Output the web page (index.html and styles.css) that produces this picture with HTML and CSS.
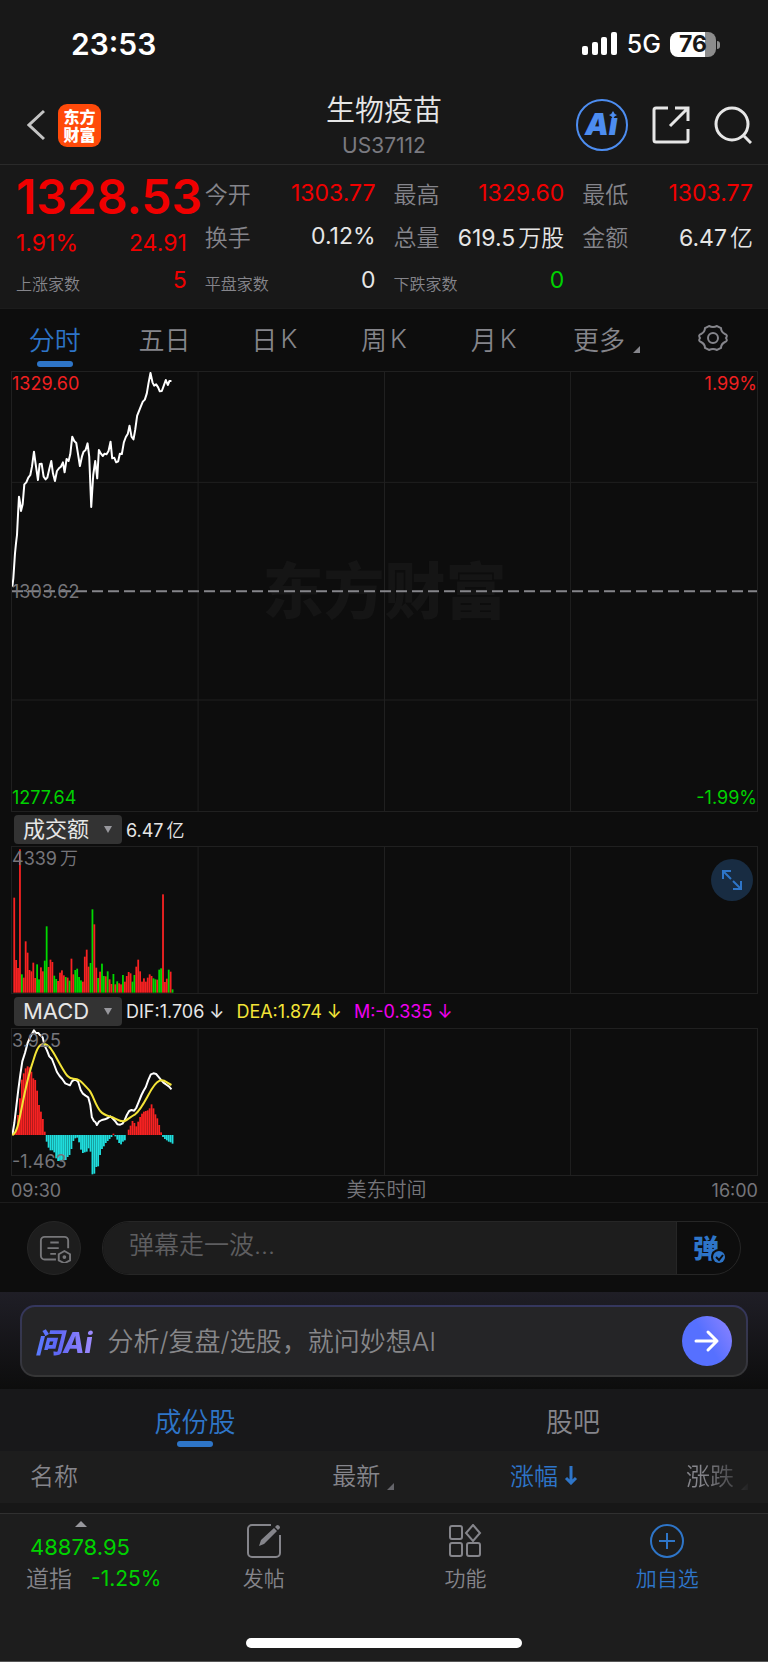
FILE: index.html
```html
<!DOCTYPE html>
<html lang="zh-CN">
<head>
    <meta charset="UTF-8">
    <meta name="viewport" content="width=device-width, initial-scale=1.0">
    <title>生物疫苗 US37112</title>
    <link rel="stylesheet" href="styles.css">
</head>
<body>
    <div class="status-bar">
        <span class="clock">23:53</span>
        <div class="status-right">
            <svg class="signal" viewBox="0 0 36 24" aria-hidden="true">
                <rect x="0" y="14" width="6" height="9" rx="2"/>
                <rect x="10" y="10" width="6" height="13" rx="2"/>
                <rect x="19" y="5" width="6" height="18" rx="2"/>
                <rect x="29" y="0" width="6" height="23" rx="2"/>
            </svg>
            <span class="network">5G</span>
            <span class="battery">76</span>
        </div>
    </div>

    <header class="header">
        <div class="header-left">
            <button class="icon-btn" aria-label="返回">
                <svg class="back-icon" viewBox="0 0 18 32"><path d="M17 2 2 16l15 14"/></svg>
            </button>
            <a class="app-logo" href="#">东方<br>财富</a>
        </div>
        <div class="header-title">
            <h1>生物疫苗</h1>
            <p>US37112</p>
        </div>
        <div class="header-right">
            <button class="icon-btn" aria-label="AI">
                <svg class="ai-icon" viewBox="0 0 52 52">
                    <circle cx="26" cy="26" r="25"/>
                    <text x="9" y="36">Aı</text>
                    <path d="M37 12q1 3 4 4-3 1-4 4-1-3-4-4 3-1 4-4z"/>
                </svg>
            </button>
            <button class="icon-btn" aria-label="分享">
                <svg class="line-icon" viewBox="0 0 38 38"><path d="M16 2H4a2 2 0 0 0-2 2v30a2 2 0 0 0 2 2h30a2 2 0 0 0 2-2V23M18 20 35 3M23 2h13v13"/></svg>
            </button>
            <button class="icon-btn" aria-label="搜索">
                <svg class="line-icon" viewBox="0 0 38 38"><circle cx="18" cy="18" r="16"/><path d="m30 30 7 7"/></svg>
            </button>
        </div>
    </header>

    <section class="quote">
        <div class="cell price up">1328.53</div>
        <div class="cell"><span class="label">今开</span><span class="up">1303.77</span></div>
        <div class="cell"><span class="label">最高</span><span class="up">1329.60</span></div>
        <div class="cell"><span class="label">最低</span><span class="up">1303.77</span></div>
        <div class="cell change up"><span>1.91%</span><span>24.91</span></div>
        <div class="cell"><span class="label">换手</span><span>0.12%</span></div>
        <div class="cell"><span class="label">总量</span><span>619.5<span class="unit">万股</span></span></div>
        <div class="cell"><span class="label">金额</span><span>6.47<span class="unit">亿</span></span></div>
        <div class="cell"><span class="label small">上涨家数</span><span class="up">5</span></div>
        <div class="cell"><span class="label small">平盘家数</span><span>0</span></div>
        <div class="cell"><span class="label small">下跌家数</span><span class="down">0</span></div>
    </section>

    <nav class="period-tabs">
        <button class="period active">分时</button>
        <button class="period">五日</button>
        <button class="period">日<span class="unit">K</span></button>
        <button class="period">周<span class="unit">K</span></button>
        <button class="period">月<span class="unit">K</span></button>
        <button class="period more">更多</button>
        <button class="period" aria-label="设置">
            <svg class="gear-icon" viewBox="0 0 30 28">
                <path d="M11 2Q15 4 19 2L23 4Q23 8 27 10Q30 11 28 14Q30 17 27 18Q23 20 23 24L19 26Q15 24 11 26L7 24Q7 20 3 18Q0 17 2 14Q0 11 3 10Q7 8 7 4Z"/>
                <circle cx="15" cy="14" r="5"/>
            </svg>
        </button>
    </nav>

    <section class="charts">
        <div class="chart price-chart">
            <span class="watermark">东方财富</span>
            <svg class="plot" viewBox="35 21 2238 1317" preserveAspectRatio="none">
                <path class="grid" d="M594 21V1338M1154 21V1338M1713 21V1338M35 352H2273M35 1005H2273"/>
                <path class="base-line" d="M35 679H2273"/>
                <polyline class="line white" points="36,665 39,640 41,610 44,565 47,535 50,510 53,450 56,395 59,412 62,438 67,418 72,358 78,352 84,338 90,330 95,305 101,260 105,290 113,345 118,297 124,296 130,335 136,343 141,338 147,312 153,288 158,325 164,348 170,318 176,310 182,305 188,292 193,322 199,282 205,288 210,268 216,215 222,228 228,234 233,265 239,303 245,275 250,260 256,255 262,235 267,275 273,426 279,330 285,288 291,340 296,255 302,266 308,273 313,266 319,268 325,258 331,230 336,280 342,278 348,292 354,289 359,266 365,267 371,232 377,216 383,206 388,182 394,215 400,223 405,195 411,152 417,137 423,122 428,110 434,104 440,85 445,55 451,24 457,52 462,62 468,58 474,67 479,79 485,78 491,62 497,45 503,60 508,48 514,48"/>
            </svg>
            <span class="tag top-left rise">1329.60</span>
            <span class="tag top-right rise">1.99%</span>
            <span class="tag mid-left">1303.62</span>
            <span class="tag bottom-left down">1277.64</span>
            <span class="tag bottom-right down">-1.99%</span>
        </div>

        <div class="indicator">
            <label class="picker">
                <select aria-label="副图指标一"><option>成交额</option></select>
            </label>
            <span>6.47<span class="unit">亿</span></span>
        </div>
        <div class="chart">
            <svg class="plot" viewBox="35 138 2238 438" preserveAspectRatio="none">
                <path class="grid" d="M594 138V576M1154 138V576M1713 138V576"/>
                <g id="volumeBars"></g>
            </svg>
            <span class="tag top-left">4339<span class="unit">万</span></span>
            <button class="expand" aria-label="全屏">
                <svg viewBox="0 0 20 20"><path d="M1 9V1h8M1 1l8 8M19 11v8h-8M19 19l-8-8"/></svg>
            </button>
        </div>

        <div class="indicator">
            <label class="picker">
                <select aria-label="副图指标二"><option>MACD</option></select>
            </label>
            <span>DIF:1.706 ↓</span>
            <span class="dea">DEA:1.874 ↓</span>
            <span class="macd">M:-0.335 ↓</span>
        </div>
        <div class="chart">
            <svg class="plot" viewBox="35 118 2238 438" preserveAspectRatio="none">
                <path class="grid" d="M594 118V556M1154 118V556M1713 118V556"/>
                <g id="macdBars"></g>
                <polyline class="line white" points="36,436 42,400 48,350 54,300 60,255 66,215 74,190 82,160 90,142 101,122 107,130 114,130 120,137 127,143 133,168 140,182 147,200 155,208 162,226 170,247 178,259 186,268 195,281 202,284 209,287 215,275 222,270 229,272 234,277 241,300 248,312 256,318 264,323 270,345 275,383 281,394 286,398 290,406 296,396 305,391 314,389 323,385 331,380 339,388 346,396 352,404 360,405 367,402 374,390 380,376 387,364 394,361 402,363 408,355 415,338 424,316 430,304 437,292 444,272 452,254 460,251 468,253 474,260 482,270 490,279 500,286 507,291 514,299"/>
                <path class="line yellow" d="M36 436C50 430 55 400 65 350S85 255 95 225S110 167 128 163S160 190 180 225S205 267 220 267S240 272 268 303C280 320 285 345 300 364C312 378 325 379 332 381C345 384 355 396 372 395C385 388 390 382 405 374C425 358 440 322 455 298C465 282 475 272 485 272S500 279 514 286"/>
            </svg>
            <span class="tag top-left">3.925</span>
            <span class="tag bottom-left">-1.463</span>
        </div>
        <div class="time-axis">
            <span>09:30</span>
            <span class="zone">美东时间</span>
            <span>16:00</span>
        </div>
    </section>

    <form class="comment-bar">
        <button type="button" class="round-btn" aria-label="弹幕设置">
            <svg viewBox="0 0 34 30">
                <path d="M18 26H6a4 4 0 0 1-4-4V6a4 4 0 0 1 4-4h21a4 4 0 0 1 4 4v8M12 8h9M9 14h12M12 20h6"/>
                <path d="m27 17 6 3.500v6.500l-6 3-6-3v-6.500z"/>
                <circle cx="27" cy="23.500" r="1"/>
            </svg>
        </button>
        <div class="comment-box">
            <input type="text" aria-label="弹幕" placeholder="弹幕走一波...">
            <button type="button" class="danmu-btn" aria-label="弹幕开关">
                <svg viewBox="0 0 34 32">
                    <text x="0" y="25">弹</text>
                    <circle class="badge-edge" cx="26" cy="24" r="8"/>
                    <circle class="badge" cx="26" cy="24" r="6"/>
                    <path d="m23 24 3 3 4-5"/>
                </svg>
            </button>
        </div>
    </form>

    <section class="ask-ai">
        <form class="ask-box">
            <span class="ask-logo">问Ai</span>
            <input type="text" aria-label="问AI" placeholder="分析/复盘/选股，就问妙想AI">
            <button type="button" class="send" aria-label="发送">
                <svg viewBox="0 0 26 24"><path d="M2 12h21M14 3l9 9-9 9"/></svg>
            </button>
        </form>
    </section>

    <nav class="section-tabs">
        <button class="section-tab active">成份股</button>
        <button class="section-tab">股吧</button>
    </nav>
    <table class="stocks">
        <thead>
            <tr>
                <th class="name">名称</th>
                <th class="sortable">最新</th>
                <th class="sorted">涨幅<svg viewBox="0 0 14 20"><path d="M7 1v17M2 13l5 5 5-5"/></svg></th>
                <th class="sortable faded">涨跌</th>
            </tr>
        </thead>
    </table>

    <footer class="bottom-bar">
        <div class="bottom-nav">
            <a class="index-link" href="#">
                <span class="index-value">48878.95</span>
                <span class="index-row"><span>道指</span><span class="index-pct">-1.25%</span></span>
            </a>
            <a class="nav-item" href="#">
                <svg viewBox="0 0 34 34"><path d="M24 1H5a4 4 0 0 0-4 4v24a4 4 0 0 0 4 4h24a4 4 0 0 0 4-4V11"/><path class="fill" d="m12 22 2-6L27 4l3 3-13 13zM28 3l2-2q3 0 3 3l-2 2z"/></svg>
                <span>发帖</span>
            </a>
            <a class="nav-item" href="#">
                <svg viewBox="0 0 34 34"><rect x="2" y="2" width="12" height="13" rx="2"/><rect x="2" y="19" width="12" height="13" rx="2"/><rect x="19" y="19" width="13" height="13" rx="2"/><path d="m25 1 7 8-7 8-7-8z"/></svg>
                <span>功能</span>
            </a>
            <a class="nav-item add" href="#">
                <svg viewBox="0 0 34 34"><circle cx="17" cy="17" r="16"/><path d="M17 9v16M9 17h16"/></svg>
                <span>加自选</span>
            </a>
        </div>
        <div class="home-indicator"></div>
    </footer>

    <script src="script.js"></script>
</body>
</html>
```
FILE: styles.css
```css
* {
    box-sizing: border-box;
}
body {
    margin: 0;
    background-color: #0d0d0d;
    color: #e6e6e6;
    font-family: Inter, "Noto Sans CJK SC", sans-serif;
    font-weight: 400;
}
button, input, select {
    font: inherit;
    color: inherit;
    background: none;
    border: none;
    padding: 0;
    margin: 0;
}
button {
    cursor: pointer;
}
a {
    color: inherit;
    text-decoration: none;
}
svg {
    display: block;
    fill: none;
    stroke: currentColor;
}
.up {
    color: #f00000;
}
.rise {
    color: #f02020;
}
.down {
    color: #00d200;
}
.unit {
    margin-left: 3px;
    font-weight: 350;
}

/* status bar */
.status-bar {
    display: flex;
    justify-content: space-between;
    align-items: center;
    height: 88px;
    padding: 0 52px 0 71px;
    background-color: #181818;
    color: #fff;
}
.clock {
    font-size: 30px;
    font-weight: 600;
}
.status-right {
    display: flex;
    align-items: center;
    gap: 9px;
}
.signal {
    width: 36px;
    height: 24px;
    fill: #fff;
    stroke: none;
}
.network {
    font-size: 25px;
    font-weight: 500;
}
.battery {
    position: relative;
    width: 46px;
    line-height: 25px;
    border-radius: 8px;
    background: linear-gradient(90deg, #fff 76%, #8c8c8c 76%);
    color: #181818;
    font-size: 23px;
    font-weight: 700;
    text-align: center;
}
.battery::after {
    content: "";
    position: absolute;
    right: -4px;
    top: 9px;
    width: 3px;
    height: 8px;
    border-radius: 0 3px 3px 0;
    background-color: #8c8c8c;
}

/* header */
.header {
    display: grid;
    grid-template-columns: 1fr auto 1fr;
    align-items: center;
    height: 77px;
    padding: 0 16px 2px;
    background-color: #181818;
    border-bottom: 1px solid #2a2a2a;
}
.header-left, .header-right {
    display: flex;
    align-items: center;
}
.header-left {
    gap: 13px;
    padding-left: 11px;
}
.header-right {
    justify-content: flex-end;
    gap: 24px;
}
.back-icon {
    width: 18px;
    height: 32px;
    color: #c4c4c4;
    stroke-width: 3;
}
.app-logo {
    width: 43px;
    height: 43px;
    padding-top: 4px;
    border-radius: 9px;
    background-color: #ff4a0a;
    color: #fff;
    font-size: 16px;
    font-weight: 900;
    line-height: 18px;
    text-align: center;
}
.header-title {
    padding-top: 4px;
    text-align: center;
}
.header-title h1 {
    margin: 0;
    font-size: 29px;
    font-weight: 350;
    line-height: 38px;
}
.header-title p {
    margin: 0;
    color: #7a7a80;
    font-size: 21px;
    line-height: 32px;
}
.ai-icon {
    width: 52px;
    height: 52px;
    color: #4d8df0;
    stroke-width: 2;
}
.ai-icon text, .ai-icon path {
    fill: currentColor;
    stroke: none;
}
.ai-icon text {
    font-size: 30px;
    font-style: italic;
    font-weight: 900;
}
.line-icon {
    width: 38px;
    height: 38px;
    stroke-width: 3;
}

/* quote */
.quote {
    display: grid;
    grid-template-columns: repeat(4, 1fr);
    grid-template-rows: 43px 43px 46px;
    column-gap: 18px;
    padding: 6px 15px 5px 16px;
    background-color: #181818;
    border-bottom: 1px solid #1c1c1c;
    font-size: 23px;
}
.cell {
    display: flex;
    justify-content: space-between;
    align-items: center;
    min-width: 0;
    white-space: nowrap;
}
.label {
    color: #85858b;
    font-weight: 350;
}
.label.small {
    padding-top: 5px;
    font-size: 16px;
}
.price {
    align-items: flex-end;
    font-size: 48px;
    font-weight: 600;
    line-height: 34px;
}
.change {
    align-items: flex-end;
    line-height: 28px;
}

/* period tabs */
.period-tabs {
    display: grid;
    grid-template-columns: repeat(7, 1fr);
    height: 62px;
    color: #85858b;
    font-size: 26px;
    font-weight: 350;
}
.period {
    position: relative;
    display: flex;
    justify-content: center;
    align-items: center;
    padding-bottom: 4px;
}
.active {
    color: #2e75c8;
}
.active::after {
    content: "";
    position: absolute;
    bottom: 4px;
    left: 50%;
    width: 36px;
    height: 6px;
    margin-left: -18px;
    border-radius: 3px;
    background-color: #2e75c8;
}
.more::after, .sortable::after {
    content: "";
    display: inline-block;
    border-left: 7px solid transparent;
    border-bottom: 7px solid currentColor;
}
.more {
    padding-left: 6px;
}
.more::after {
    margin: 22px 0 0 8px;
}
.gear-icon {
    width: 30px;
    height: 28px;
    stroke-width: 2;
}

/* charts */
.charts {
    padding: 0 10px 0 11px;
    border-bottom: 1px solid #1c1c1c;
}
.chart {
    position: relative;
    height: 148px;
    border: 1px solid #202020;
}
.price-chart {
    height: 441px;
}
.plot {
    position: relative;
    width: 100%;
    height: 100%;
}
.plot path, .plot polyline {
    vector-effect: non-scaling-stroke;
}
.grid {
    stroke: #202020;
}
.base-line {
    stroke: #85858a;
    stroke-width: 2;
    stroke-dasharray: 11 5;
}
.line {
    stroke-width: 2;
    stroke-linejoin: round;
}
.white {
    stroke: #fff;
}
.yellow {
    stroke: #f3e437;
}
.bar-red {
    fill: #f82222;
    stroke: none;
}
.bar-green {
    fill: #00d800;
    stroke: none;
}
.bar-cyan {
    fill: #1fdede;
    stroke: none;
}
.watermark {
    position: absolute;
    top: 50%;
    width: 100%;
    color: #151515;
    font-size: 61px;
    font-weight: 900;
    line-height: 80px;
    margin-top: -40px;
    text-align: center;
}
.tag {
    position: absolute;
    color: #75757a;
    font-size: 18px;
    line-height: 22px;
}
.tag.rise {
    color: #f02020;
}
.tag.down {
    color: #00d200;
}
.top-left {
    top: 1px;
    left: 0;
}
.top-right {
    top: 1px;
    right: 0;
}
.mid-left {
    top: 50%;
    left: 0;
    margin-top: -11px;
}
.bottom-left {
    bottom: 2px;
    left: 0;
}
.bottom-right {
    bottom: 2px;
    right: 0;
}
.indicator {
    display: flex;
    align-items: center;
    gap: 12px;
    height: 34px;
    padding-left: 3px;
    font-size: 18px;
}
.picker {
    position: relative;
    margin-right: -8px;
}
.picker select {
    width: 108px;
    height: 29px;
    padding-left: 9px;
    border-radius: 4px;
    background-color: #333;
    appearance: none;
    font-size: 22px;
    line-height: 29px;
}
.picker::after {
    content: "";
    position: absolute;
    top: 11px;
    right: 10px;
    border: 4px solid transparent;
    border-top: 7px solid #98989d;
    border-bottom: 0;
}
.dea {
    color: #f3e437;
}
.macd {
    color: #f000f0;
}
.expand {
    position: absolute;
    top: 12px;
    right: 4px;
    width: 42px;
    height: 42px;
    padding: 11px;
    border-radius: 50%;
    background-color: #182c42;
    color: #2e75c8;
}
.expand svg {
    stroke-width: 2;
}
.time-axis {
    display: flex;
    justify-content: space-between;
    padding-top: 3px;
    color: #75757a;
    font-size: 18px;
    line-height: 23px;
}
.zone {
    font-size: 20px;
    font-weight: 350;
}

/* comment bar */
.comment-bar {
    display: flex;
    gap: 21px;
    padding: 18px 27px 17px;
}
.round-btn {
    width: 54px;
    height: 54px;
    padding: 12px 9px 10px 11px;
    border: 1px solid #262626;
    border-radius: 50%;
    background-color: #1d1d1d;
    color: #77777a;
}
.round-btn svg {
    stroke-width: 2;
}
.comment-box {
    flex: 1;
    display: flex;
    height: 54px;
    border: 1px solid #262626;
    border-radius: 27px;
    overflow: hidden;
}
.comment-box input {
    flex: 1;
    min-width: 0;
    padding: 0 26px 6px;
    background-color: #1d1d1d;
    font-size: 25px;
}
input::placeholder {
    color: #5e5e60;
    font-weight: 350;
    opacity: 1;
}
.danmu-btn {
    width: 64px;
    padding: 10px 14px 8px 16px;
    border-left: 1px solid #262626;
    color: #2e75c8;
}
.danmu-btn svg {
    width: 34px;
    height: 32px;
    stroke: #0d0d0d;
    stroke-width: 2;
}
.danmu-btn text {
    fill: #2e75c8;
    stroke: none;
    font-size: 26px;
    font-weight: 900;
}
.badge-edge {
    fill: #0d0d0d;
    stroke: none;
}
.badge {
    fill: #2e75c8;
    stroke: none;
}

/* ask ai */
.ask-ai {
    padding: 13px 20px 12px;
    background: linear-gradient(#1f1e26, #0d0d0d);
}
.ask-box {
    display: flex;
    align-items: center;
    gap: 15px;
    height: 72px;
    padding: 0 14px 0 13px;
    border: 2px solid transparent;
    border-radius: 15px;
    background: linear-gradient(#252527, #252527) padding-box, linear-gradient(#35375f, #363636) border-box;
}
.ask-logo {
    background: linear-gradient(90deg, #5a7dff, #5f66f5 40%, #a08cff);
    background-clip: text;
    color: transparent;
    font-size: 28px;
    font-style: italic;
    font-weight: 800;
    white-space: nowrap;
}
.ask-box input {
    flex: 1;
    min-width: 0;
    font-size: 26px;
}
.ask-box input::placeholder {
    color: #87878a;
}
.send {
    width: 50px;
    height: 50px;
    padding: 13px 12px;
    border-radius: 50%;
    background: linear-gradient(60deg, #5670ff 50%, #8f84ff);
    color: #fff;
}
.send svg {
    stroke-width: 3;
    stroke-linecap: round;
    stroke-linejoin: round;
}

/* constituents */
.section-tabs {
    display: grid;
    grid-template-columns: 1fr 1fr;
    height: 62px;
    padding: 0 6px;
    background-color: #18181a;
    color: #85858b;
    font-size: 27px;
    font-weight: 350;
}
.section-tab {
    position: relative;
}
.section-tab.active {
    color: #2e75c8;
}
.stocks {
    width: 100%;
    table-layout: fixed;
    border-spacing: 0;
    background-color: #1d1d1d;
    border-bottom: 10px solid #171717;
    color: #85858b;
}
.stocks th {
    height: 52px;
    padding: 0;
    font-size: 24px;
    font-weight: 350;
    line-height: 36px;
    text-align: right;
}
.stocks .name {
    width: 27%;
    padding-left: 30px;
    text-align: left;
}
.stocks .sorted {
    padding-right: 3px;
    color: #2e75c8;
}
.stocks .faded {
    padding-right: 20px;
    -webkit-mask-image: linear-gradient(90deg, #000 65%, transparent 92%);
    mask-image: linear-gradient(90deg, #000 65%, transparent 92%);
}
.sortable::after {
    margin-left: 7px;
    vertical-align: -5px;
    opacity: 0.7;
}
.sorted svg {
    display: inline-block;
    width: 14px;
    height: 20px;
    margin-left: 6px;
    stroke-width: 3;
}

/* bottom bar */
.bottom-bar {
    background-color: #1d1d1d;
    border-top: 1px solid #303030;
    border-bottom: 1px solid #555;
}
.bottom-nav {
    display: grid;
    grid-template-columns: 21fr 26fr 26fr 26fr;
    padding-top: 10px;
    height: 124px;
    color: #85858b;
    font-size: 21px;
    font-weight: 350;
    line-height: 30px;
}
.index-link {
    padding-left: 26px;
    white-space: nowrap;
}
.index-link::before {
    content: "";
    display: block;
    width: 0;
    margin: -3px 0 5px 49px;
    border: 6px solid transparent;
    border-top: 0;
    border-bottom: 6px solid #98989d;
}
.index-value {
    display: block;
    padding-left: 4px;
    color: #00d200;
    font-size: 22px;
    font-weight: 400;
}
.index-row {
    display: flex;
    gap: 19px;
    font-size: 23px;
    line-height: 34px;
}
.index-pct {
    color: #00d200;
    font-size: 21px;
    font-weight: 400;
}
.nav-item {
    display: flex;
    flex-direction: column;
    align-items: center;
    gap: 6px;
}
.nav-item svg {
    width: 34px;
    height: 34px;
    stroke-width: 2;
}
.nav-item .fill {
    fill: currentColor;
    stroke: none;
}
.nav-item.add {
    color: #2e75c8;
}
.home-indicator {
    width: 36%;
    height: 10px;
    margin: 0 auto 13px;
    border-radius: 5px;
    background-color: #fff;
}
```
FILE: script.js
```js
const SVG_NS = 'http://www.w3.org/2000/svg';
const BAR_START = 39;
const BAR_STEP = 5.73;

// turnover per minute, g marks a falling minute
const volume = ('285 98 74 430 55g 45 154 120 68 64 90 44 85g 40g 76 64 96g 199g 77 99 92 51g 41g 35 60 67 52 47g 45 36g ' +
    '102 55 68g 72g 47g 37g 33 108 129 78 89g 250g 205 75 44g 63 87g 50g 49 64g 40 26 56g 25 34g 28 25 53g 33 50 ' +
    '62 58 33g 53g 78 99 64 33 43 33 45 55 50 43g 40g 39 69g 73g 295 32 42 69g 63 10g').split(' ');

const macd = [2, 12, 60, 110, 166, 185, 200, 206, 203, 190, 170, 165, 133, 90, 70, 48, 10,
    -20, -38, -46, -46, -52, -70, -78, -78, -78, -76, -75, -66, -60, -42, -18, -10, -8, -22, -44, -54, -52, -50, -40, -50,
    -118, -116, -96, -94, -60, -42, -34, -24, -18, -12, -6, 4, -4, -14, -24, -28, -20, -16, 0, 16, 28, 42, 36, 26, 40, 54,
    64, 70, 72, 74, 80, 92, 80, 62, 50, 30, 8, -6, -12, -16, -20, -22, -26];

function addBar(group, index, y, height, className) {
    const rect = document.createElementNS(SVG_NS, 'rect');
    rect.setAttribute('x', BAR_START + index * BAR_STEP);
    rect.setAttribute('y', y);
    rect.setAttribute('width', 5.4);
    rect.setAttribute('height', height);
    rect.setAttribute('class', className);
    group.appendChild(rect);
}

const volumeBars = document.getElementById('volumeBars');
volume.forEach((item, index) => {
    const value = parseInt(item, 10);
    addBar(volumeBars, index, 575 - value, value, item.endsWith('g') ? 'bar-green' : 'bar-red');
});

const macdBars = document.getElementById('macdBars');
macd.forEach((value, index) => {
    addBar(macdBars, index, value > 0 ? 436 - value : 436, Math.abs(value), value > 0 ? 'bar-red' : 'bar-cyan');
});
```
